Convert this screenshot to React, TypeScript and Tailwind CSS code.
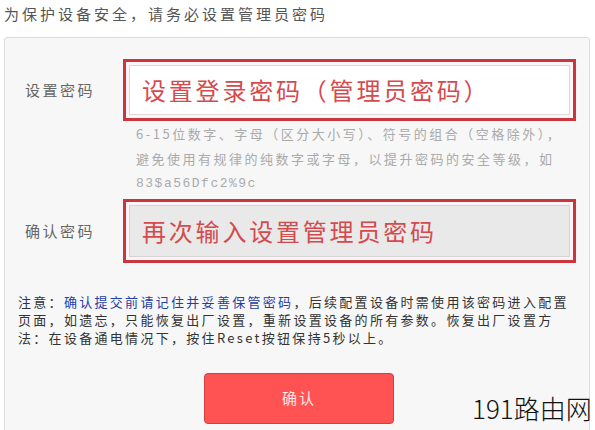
const cjk = { fontFamily: '"Noto Sans CJK SC", "Noto Sans", sans-serif' };

export default function App() {
  return (
    <div className="relative w-[595px] h-[430px] overflow-hidden bg-white" style={cjk}>
      {/* Header */}
      <div className="h-[37px] pl-[4px] pt-[3px] text-[15px] leading-[22px] tracking-[3px] text-[#555]">
        为保护设备安全，请务必设置管理员密码
      </div>

      {/* Panel */}
      <div className="ml-[4px] w-[586px] rounded-[3px] border border-[#dcdcdc] bg-[#f7f7f7] pt-[21px] pb-[30px]">
        {/* Row 1 */}
        <div className="flex items-center">
          <div className="w-[118px] pl-[20px] text-[15px] tracking-[2.5px] text-[#666]">设置密码</div>
          <div className="h-[62px] w-[453px] border-[3px] border-[#c9373e] bg-[#fdf5f5] p-[3px]">
            <div className="flex h-full items-center border border-[#d9d9d9] bg-white pl-[12px] text-[24px] tracking-[2.8px] text-[#d44a4d]">
              设置登录密码（管理员密码）
            </div>
          </div>
        </div>

        {/* Hints */}
        <div className="ml-[131px] text-[13px] leading-[25px] tracking-[2.5px] text-[#aaa]">
          <div>6-15位数字、字母（区分大小写）、符号的组合（空格除外），</div>
          <div>避免使用有规律的纯数字或字母，以提升密码的安全等级，如</div>
          <div className="tracking-[1.5px]" style={{ fontFamily: '"Liberation Mono", monospace' }}>83$a56Dfc2%9c</div>
        </div>

        {/* Row 2 */}
        <div className="mt-[3px] flex items-center">
          <div className="w-[118px] pl-[20px] text-[15px] tracking-[2.5px] text-[#666]">确认密码</div>
          <div className="h-[64px] w-[453px] border-[3px] border-[#c9373e] bg-[#fdf5f5] p-[3px]">
            <div className="flex h-full items-center border border-[#d5d5d5] bg-[#e9e9e9] pl-[12px] text-[24px] tracking-[2.8px] text-[#d44a4d]">
              再次输入设置管理员密码
            </div>
          </div>
        </div>

        {/* Notice */}
        <div className="mt-[30px] pl-[13px] pr-[4px] text-[13px] leading-[18px] tracking-[2.3px] text-[#333]">
          <div className="whitespace-nowrap">
            注意：<span className="text-[#1d3fa6]">确认提交前请记住并妥善保管密码</span>，后续配置设备时需使用该密码进入配置
          </div>
          <div className="whitespace-nowrap">页面，如遗忘，只能恢复出厂设置，重新设置设备的所有参数。恢复出厂设置方</div>
          <div className="whitespace-nowrap">法：在设备通电情况下，按住Reset按钮保持5秒以上。</div>
        </div>

        {/* Button */}
        <div className="mt-[26px] pl-[199px]">
          <button className="flex h-[51px] w-[190px] items-center justify-center rounded-[4px] border border-[#cf4040] bg-[#ff5353] text-[15px] tracking-[2px] text-[#fde8e8]">
            确认
          </button>
        </div>
      </div>

      {/* Watermark */}
      <div className="absolute left-[472px] top-[391px] whitespace-nowrap text-[26px] font-light leading-[34px] text-[#111]">191路由网</div>
    </div>
  );
}
